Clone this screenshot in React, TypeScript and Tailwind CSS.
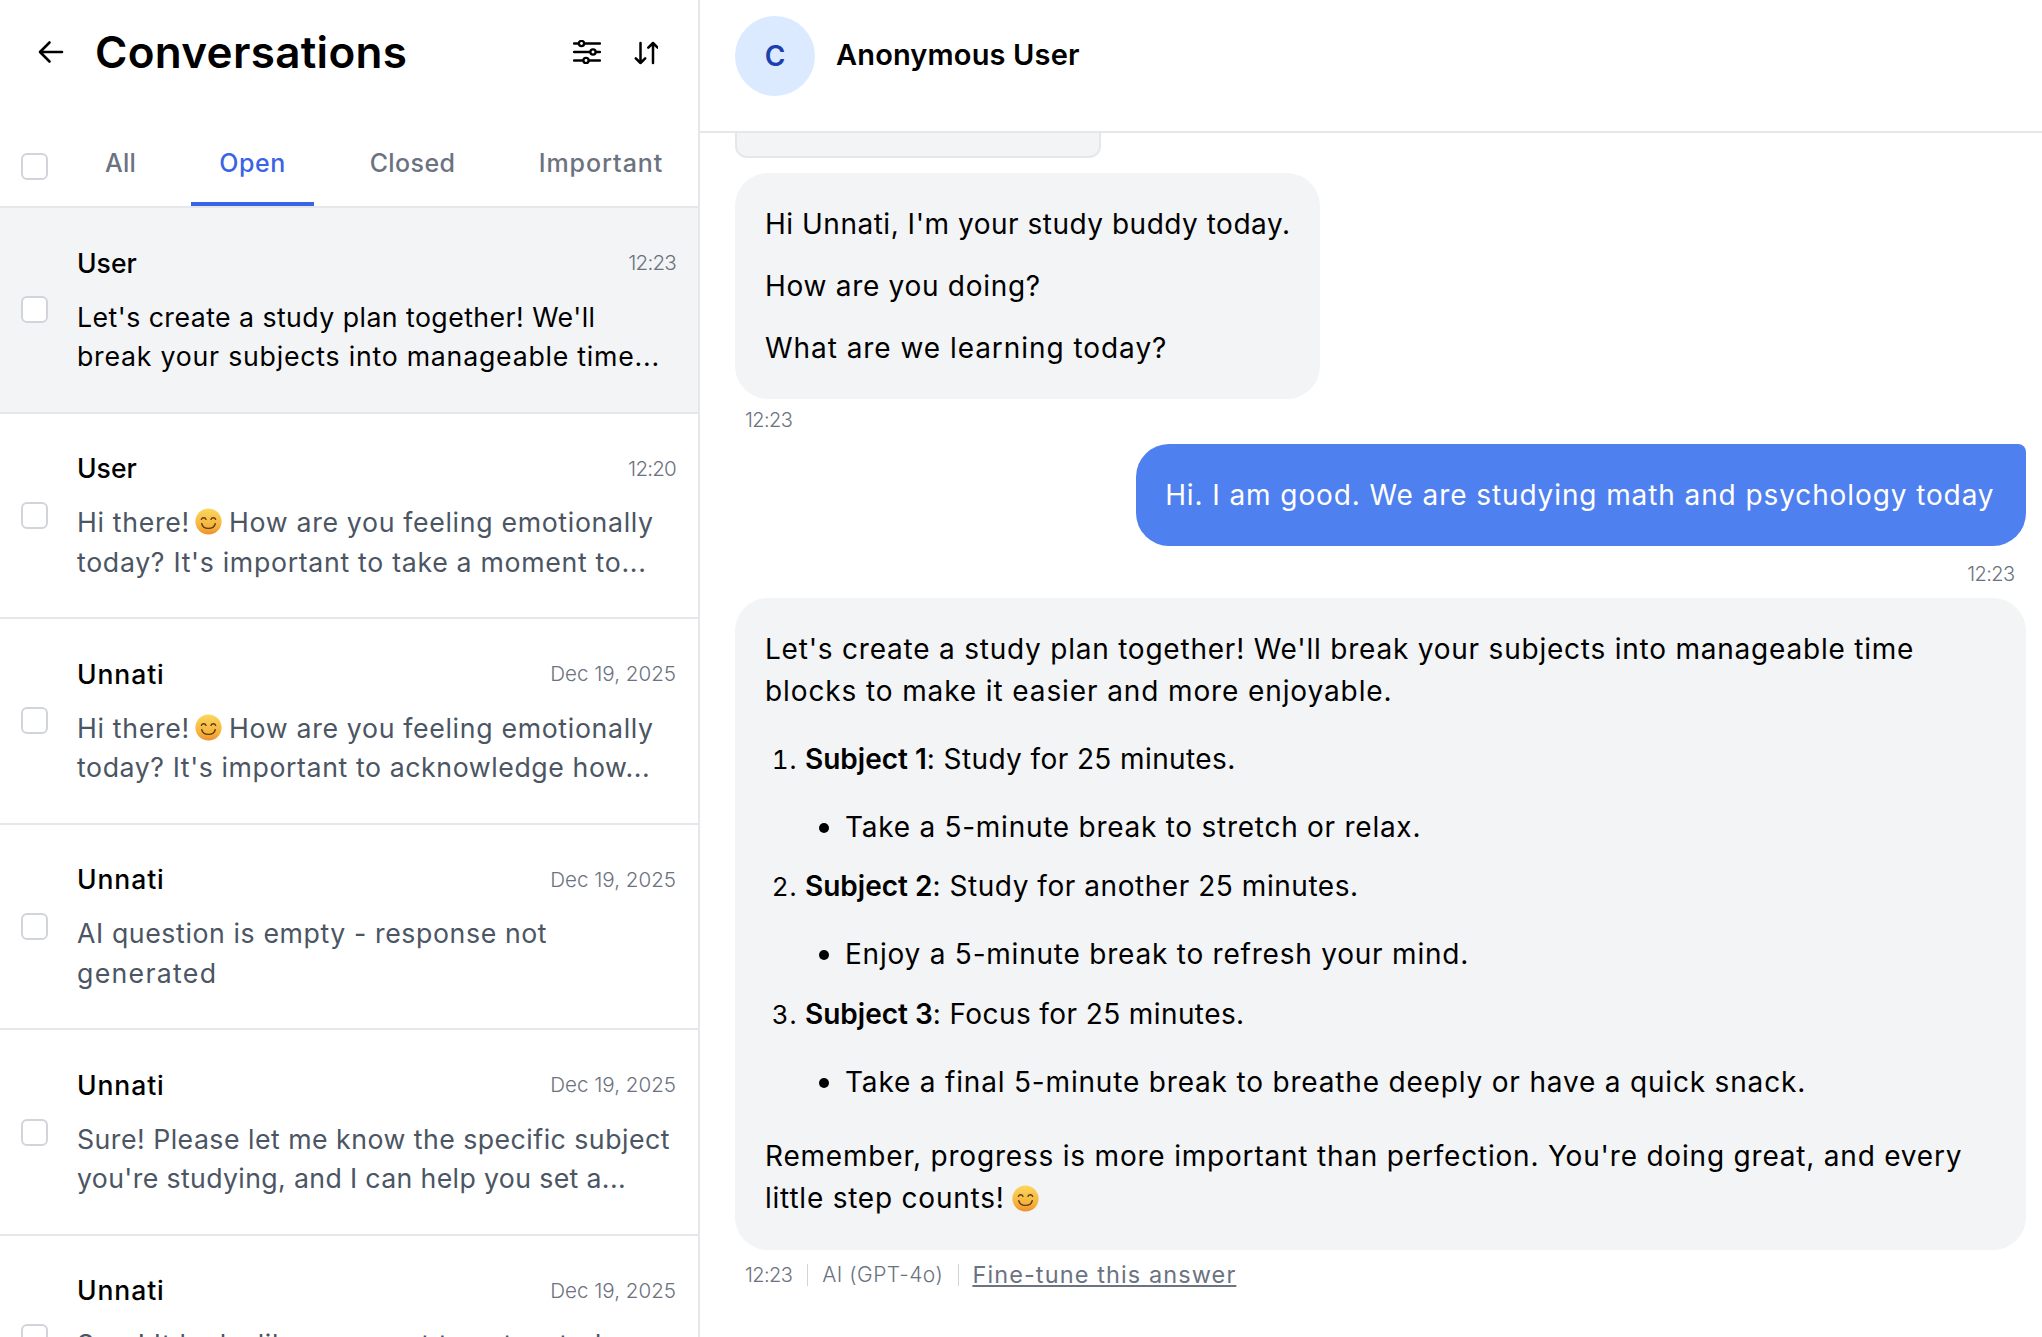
import React from 'react';

const font = "[font-family:Inter,'Liberation_Sans',sans-serif]";

const tabs = [
  { label: 'All', width: 'w-[85px]', track: 'tracking-[0.2px]', active: false },
  { label: 'Open', width: 'w-[123px]', track: 'tracking-[0.5px]', active: true },
  { label: 'Closed', width: 'w-[141px]', track: 'tracking-[0.4px]', active: false },
  { label: 'Important', width: 'w-[180px]', track: 'tracking-[0.95px]', active: false },
];

const rows = [
  {
    name: 'User',
    time: '12:23',
    active: true,
    lines: [
      { text: "Let's create a study plan together! We'll", track: 'tracking-[0.45px]' },
      { text: 'break your subjects into manageable time...', track: 'tracking-[0.77px]' },
    ],
  },
  {
    name: 'User',
    time: '12:20',
    lines: [
      { text: 'Hi there! :) How are you feeling emotionally', track: 'tracking-[0.67px]' },
      { text: "today? It's important to take a moment to...", track: 'tracking-[0.69px]' },
    ],
  },
  {
    name: 'Unnati',
    time: 'Dec 19, 2025',
    lines: [
      { text: 'Hi there! :) How are you feeling emotionally', track: 'tracking-[0.67px]' },
      { text: "today? It's important to acknowledge how...", track: 'tracking-[0.59px]' },
    ],
  },
  {
    name: 'Unnati',
    time: 'Dec 19, 2025',
    lines: [
      { text: 'AI question is empty - response not', track: 'tracking-[0.6px]' },
      { text: 'generated', track: 'tracking-[1.3px]' },
    ],
  },
  {
    name: 'Unnati',
    time: 'Dec 19, 2025',
    lines: [
      { text: 'Sure! Please let me know the specific subject', track: 'tracking-[0.48px]' },
      { text: "you're studying, and I can help you set a...", track: 'tracking-[0.36px]' },
    ],
  },
  {
    name: 'Unnati',
    time: 'Dec 19, 2025',
    lines: [
      { text: 'Sure! It looks like you want to set a study', track: 'tracking-[0.6px]' },
      { text: 'plan for your subjects today...', track: 'tracking-[0.6px]' },
    ],
  },
];

const Smile: React.FC<{ id: string; className?: string }> = ({ id, className = '' }) => (
  <svg viewBox="0 0 32 32" className={`inline-block w-[27px] h-[27px] ${className}`}>
    <defs>
      <linearGradient id={id} x1="0" y1="0" x2="0" y2="1">
        <stop offset="0" stopColor="#fbd75e" />
        <stop offset="0.7" stopColor="#f6b23c" />
        <stop offset="1" stopColor="#ee8f2c" />
      </linearGradient>
    </defs>
    <circle cx="16" cy="16" r="15.5" fill={`url(#${id})`} />
    <path d="M7.5 13.5c1-2.6 4.6-2.6 5.6 0M18.9 13.5c1-2.6 4.6-2.6 5.6 0" fill="none" stroke="#5a3a12" strokeWidth="1.6" strokeLinecap="round" />
    <path d="M8 18.5c1.5 7.5 14.5 7.5 16 0" fill="none" stroke="#5a3a12" strokeWidth="1.7" strokeLinecap="round" />
  </svg>
);

const Checkbox: React.FC = () => (
  <div className="w-[27px] h-[27px] shrink-0 rounded-[6px] border-2 border-[#d1d5db] bg-white" />
);

const withEmoji = (line: string, id: string) => {
  const parts = line.split(':)');
  if (parts.length === 1) return line;
  return (
    <>
      {parts[0]}
      <Smile id={id} className="align-[-3px] -ml-[3px] -mr-[1px]" />
      {parts[1]}
    </>
  );
};

export default function App() {
  return (
    <div className={`flex w-[2042px] h-[1337px] overflow-hidden bg-white text-black ${font}`}>
      <aside className="w-[700px] shrink-0 h-full overflow-hidden border-r-2 border-[#e5e7eb] flex flex-col">
        <div className="h-[104px] shrink-0 flex items-center pl-[37px]">
          <svg viewBox="0 0 28 28" className="w-[28px] h-[28px] shrink-0" fill="none" stroke="black" strokeWidth="2.6" strokeLinecap="round" strokeLinejoin="round">
            <path d="M25 14H3M12.5 4.5 3 14l9.5 9.5" />
          </svg>
          <h1 className="ml-[30px] text-[44px] leading-none font-semibold tracking-[0.3px]">Conversations</h1>
          <div className="ml-auto flex items-center pr-[40.5px]">
            <svg viewBox="0 0 28 24" className="w-[28px] h-[24px]" fill="none" stroke="black" strokeWidth="2.3" strokeLinecap="round">
              <path d="M1 3.5h4.5M11.5 3.5H27M1 12h16M23 12h4M1 20.5h9M16 20.5h11" />
              <circle cx="8.5" cy="3.5" r="2.6" />
              <circle cx="20" cy="12" r="2.6" />
              <circle cx="13" cy="20.5" r="2.6" />
            </svg>
            <svg viewBox="0 0 24 24" className="ml-[32.5px] mt-[2px] w-[24px] h-[24px]" fill="none" stroke="black" strokeWidth="2.5" strokeLinecap="round" strokeLinejoin="round">
              <path d="M6.5 2v20M1.8 17.3l4.7 4.7 4.7-4.7M19 22V2M14.3 6.7 19 2l4.7 4.7" />
            </svg>
          </div>
        </div>
        <div className="h-[104px] shrink-0 border-b-2 border-[#e5e7eb] flex items-end pl-[21px]">
          <div className="self-start mt-[49px]">
            <Checkbox />
          </div>
          <div className="ml-[30px] flex gap-[28px]">
            {tabs.map((t) => (
              <div
                key={t.label}
                className={`${t.width} ${t.track} h-[102px] pt-[43px] text-center text-[25px] leading-[32px] font-medium border-b-4 whitespace-nowrap ${
                  t.active ? 'text-[#3b63e5] border-[#3b63e5]' : 'text-[#6b7280] border-transparent'
                }`}
              >
                {t.label}
              </div>
            ))}
          </div>
        </div>
        {rows.map((r, i) => (
          <div
            key={i}
            className={`h-[205.6px] shrink-0 flex items-center pl-[21px] border-b-2 border-[#e5e7eb] ${r.active ? 'bg-[#f3f4f6]' : ''}`}
          >
            <Checkbox />
            <div className="ml-[29px] flex-1 min-w-0 self-start pt-[39px] pr-[22px]">
              <div className="flex items-center justify-between">
                <span className={`text-[26.5px] leading-[30px] font-medium ${r.name === 'User' ? 'tracking-[0px]' : 'tracking-[0.9px]'}`}>{r.name}</span>
                <span className={`mt-[1px] text-[20.6px] leading-[30px] font-light text-[#6b7280] ${r.time.length < 6 ? 'tracking-[-0.8px]' : ''}`}>{r.time}</span>
              </div>
              <div className={`mt-[19.5px] text-[26.7px] leading-[39.6px] whitespace-nowrap ${r.active ? 'text-black' : 'text-[#4b5563]'}`}>
                {r.lines.map((l, j) => (
                  <div key={j} className={l.track}>
                    {withEmoji(l.text, `row-${i}-${j}`)}
                  </div>
                ))}
              </div>
            </div>
          </div>
        ))}
      </aside>

      <main className="flex-1 min-w-0 h-full overflow-hidden flex flex-col">
        <div className="h-[133px] shrink-0 border-b-2 border-[#e5e7eb] pl-[35px] pt-[16px] flex items-start">
          <div className="w-[80px] h-[80px] rounded-full bg-[#dbeafe] text-[#1e40af] flex items-center justify-center text-[28px] font-semibold">C</div>
          <div className="ml-[21px] mt-[20px] text-[29px] leading-[38px] font-semibold tracking-[0.15px]">Anonymous User</div>
        </div>
        <div className="pl-[35px] pr-[16.5px] flex flex-col text-[28px] leading-[42px] tracking-[0.78px]">
          <div className="w-[366px] h-[25px] shrink-0 bg-[#f3f4f6] border-2 border-t-0 border-[#e5e7eb] rounded-b-[12px]" />
          <div className="mt-[15px] w-[585px] bg-[#f3f4f6] rounded-[33px] pl-[30px] pt-[29.5px] pb-[30.5px] whitespace-nowrap">
            <p className="tracking-[0.51px]">Hi Unnati, I'm your study buddy today.</p>
            <p className="mt-[20px] tracking-[0.71px]">How are you doing?</p>
            <p className="mt-[20px] tracking-[0.95px]">What are we learning today?</p>
          </div>
          <div className="mt-[9px] pl-[10px] text-[20px] leading-[24px] font-light text-[#6b7280] tracking-[-0.6px]">12:23</div>
          <div className="mt-[12px] self-end w-[889.5px] bg-[#4f80ef] text-white rounded-[33px] rounded-tr-[8px] py-[30px] pr-[31px] text-right whitespace-nowrap tracking-[0.9px]">
            Hi. I am good. We are studying math and psychology today
          </div>
          <div className="mt-[16px] pr-[11px] text-right text-[20px] leading-[24px] font-light text-[#6b7280] tracking-[-0.6px]">12:23</div>
          <div className="mt-[12px] bg-[#f3f4f6] rounded-[33px] pl-[30px] pt-[29.5px] h-[652px] whitespace-nowrap">
            <p>Let's create a study plan together! We'll break your subjects into manageable time</p>
            <p className="tracking-[0.89px]">blocks to make it easier and more enjoyable.</p>
            <ol className="mt-[26px] list-decimal pl-[40px] marker:text-[26px]">
              <li>
                <p className="tracking-[0.4px]"><strong className="font-semibold tracking-normal">Subject 1</strong>: Study for 25 minutes.</p>
                <ul className="mt-[25px] list-disc pl-[40px] marker:text-[30px]!">
                  <li className="tracking-[0.74px]">Take a 5-minute break to stretch or relax.</li>
                </ul>
              </li>
              <li className="mt-[17.5px]">
                <p className="tracking-[0.55px]"><strong className="font-semibold tracking-normal">Subject 2</strong>: Study for another 25 minutes.</p>
                <ul className="mt-[25px] list-disc pl-[40px] marker:text-[30px]!">
                  <li>Enjoy a 5-minute break to refresh your mind.</li>
                </ul>
              </li>
              <li className="mt-[18px]">
                <p className="tracking-[0.4px]"><strong className="font-semibold tracking-normal">Subject 3</strong>: Focus for 25 minutes.</p>
                <ul className="mt-[25px] list-disc pl-[40px] marker:text-[30px]!">
                  <li className="tracking-[0.82px]">Take a final 5-minute break to breathe deeply or have a quick snack.</li>
                </ul>
              </li>
            </ol>
            <p className="mt-[32px] tracking-[0.8px]">Remember, progress is more important than perfection. You're doing great, and every</p>
            <p>little step counts! <Smile id="bubble-smile" className="align-[-4px] -ml-[1px]" /></p>
          </div>
          <div className="mt-[13px] pl-[10px] flex items-center text-[20px] leading-[24px] font-light text-[#6b7280] tracking-[-0.6px]">
            <span>12:23</span>
            <span className="mx-[14.5px] w-px h-[22px] bg-[#d1d5db]" />
            <span className="text-[21px] tracking-[0.5px]">AI (GPT-4o)</span>
            <span className="ml-[14.5px] mr-[13.5px] w-px h-[22px] bg-[#d1d5db]" />
            <span className="text-[23.5px] font-normal tracking-[1.1px] underline">Fine-tune this answer</span>
          </div>
        </div>
      </main>
    </div>
  );
}
